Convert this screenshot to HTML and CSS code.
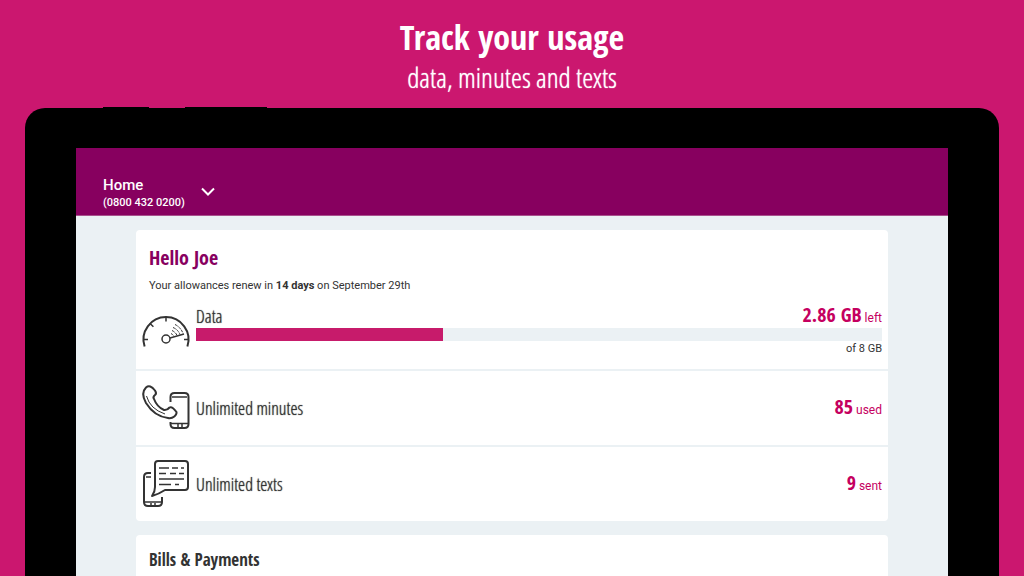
FILE: index.html
```html
<!DOCTYPE html>
<html lang="en">
<head>
    <meta charset="UTF-8">
    <meta name="viewport" content="width=device-width, initial-scale=1.0">
    <title>Track your usage</title>
    <link rel="stylesheet" href="styles.css">
</head>
<body>
    <header class="intro">
        <h1>Track your usage</h1>
        <p>data, minutes and texts</p>
    </header>

    <div class="tablet">
        <span class="side-button power"></span>
        <span class="side-button volume"></span>
        <div class="screen">
            <div class="app-bar">
                <button type="button" class="account">
                    <span class="account-text">
                        <span class="account-name">Home</span>
                        <span class="account-number">(0800 432 0200)</span>
                    </span>
                    <svg class="chevron" viewBox="0 0 14 9" aria-hidden="true">
                        <path d="M1 1.5l6 6 6-6"/>
                    </svg>
                </button>
            </div>

            <main class="content">
                <section class="card">
                    <div class="greeting">
                        <h2>Hello Joe</h2>
                        <p>Your allowances renew in <strong>14 days</strong> on September 29th</p>
                    </div>

                    <div class="row data-row">
                        <svg class="icon" viewBox="0 0 48 48" aria-hidden="true">
                            <path d="M2.600 39.500A22.500 22.500 0 1 1 45.400 39.500"/>
                            <path class="thin" d="M24 9.500v5M7.800 16.200l3.600 3.600M2 32.500h4M42 32.500h4"/>
                            <circle class="thin" cx="24" cy="32" r="4"/>
                            <path class="thin" d="M28 31l14-4"/>
                            <path class="fine" stroke-dasharray="3 1" d="M33 17.500q6 3 8 9M31 20.500q5 2 7 7M30 23.500q4 2 5 5M29 26.500q2 1 3 3"/>
                        </svg>
                        <div class="data">
                            <div class="data-top">
                                <h3>Data</h3>
                                <p class="amount"><strong>2.86 GB</strong> left</p>
                            </div>
                            <div class="bar"><div class="bar-fill" style="width: 36%"></div></div>
                            <p class="total">of 8 GB</p>
                        </div>
                    </div>

                    <div class="row">
                        <svg class="icon" viewBox="0 0 48 48" aria-hidden="true">
                            <path d="M28.500 18v-5q0-4 4-4h10q4 0 4 4v27q0 4-4 4h-10q-4 0-4-4v-2"/>
                            <path class="thin" d="M30 13h15M29 39.500h17M36 40v3M40 40v3"/>
                            <path d="M4 3.500C1 6.500 0 12 4 19C9 27 17 33 26 34C31 35 35 31 34.500 28Q30 22 27.500 23.500Q25 26.500 22 26Q15 23 12 15Q10.500 13 13 11Q15 9.500 13 6.500Q8 0 4 3.500Z"/>
                            <path class="fine" d="M4.500 12Q8 25 23 30"/>
                        </svg>
                        <h3>Unlimited minutes</h3>
                        <p class="amount"><strong>85</strong> used</p>
                    </div>

                    <div class="row">
                        <svg class="icon" viewBox="0 0 48 48" aria-hidden="true">
                            <path d="M9 13H6q-4 0-4 4v25q0 4 4 4h10q4 0 4-4v-5"/>
                            <path class="thin" d="M4 17h5M2 42h18M9 43v2M13 43v2"/>
                            <path d="M16 1h27q3 0 3 3v23q0 3-3 3H23Q17 34 10 36Q13 32 13 27V4q0-3 3-3Z"/>
                            <path class="thin" d="M17 8h10M30 8h6M39 8h3M17 13.500h7M28 13.500h6M37 13.500h5M17 19h25M17 24.500h12M33 24.500h4"/>
                        </svg>
                        <h3>Unlimited texts</h3>
                        <p class="amount"><strong>9</strong> sent</p>
                    </div>
                </section>

                <section class="card">
                    <h2 class="bills">Bills &amp; Payments</h2>
                </section>
            </main>
        </div>
    </div>
</body>
</html>
```

FILE: styles.css
```css
* {
    box-sizing: border-box;
}
body {
    margin: 0;
    height: 100vh;
    overflow: hidden;
    display: flex;
    flex-direction: column;
    background-color: #cb176f;
    color: #333;
    font-family: Roboto, "Liberation Sans", sans-serif;
    font-size: 11px;
    line-height: 16px;
}
h1, h2, h3, p {
    margin: 0;
}
h1, h2, .amount strong {
    font-family: "Open Sans Condensed", "Liberation Sans Narrow", sans-serif;
}
h3, .intro p {
    font-family: "Open Sans Condensed Light", "Roboto Condensed", sans-serif;
    font-weight: 300;
    text-shadow: 0 0 1px currentColor;
}
.intro {
    padding-top: 15px;
    color: #fff;
    text-align: center;
}
.intro h1 {
    font-size: 34px;
    line-height: 44px;
}
.intro p {
    font-size: 28px;
    line-height: 37px;
}
.tablet {
    position: relative;
    flex: 1;
    margin: 12px 25px 0;
    padding: 40px 51px 0;
    background-color: #000;
    border-radius: 20px 20px 0 0;
}
.side-button {
    position: absolute;
    top: -1px;
    height: 2px;
    background-color: #000;
}
.power {
    left: 78px;
    width: 46px;
}
.volume {
    left: 160px;
    width: 82px;
}
.screen {
    height: 100%;
    background-color: #ebf1f4;
}
.app-bar {
    padding: 28px 27px 4px;
    background-color: #87005f;
    border-bottom: 1px solid #a8508c;
}
.account {
    display: flex;
    align-items: center;
    gap: 16px;
    padding: 0;
    border: none;
    background: none;
    color: #fff;
    font-family: inherit;
    text-align: left;
    cursor: pointer;
}
.account-text {
    display: flex;
    flex-direction: column;
}
.account-name {
    font-size: 15px;
    font-weight: 500;
    line-height: 18px;
}
.account-number {
    font-size: 11px;
    font-weight: 500;
    line-height: 17px;
}
.chevron {
    width: 14px;
    height: 9px;
    margin-bottom: 4px;
    fill: none;
    stroke: #fff;
    stroke-width: 2;
}
.content {
    display: flex;
    flex-direction: column;
    gap: 14px;
    padding: 14px 60px 0;
}
.card {
    background-color: #fff;
    border-radius: 4px;
}
.greeting {
    padding: 16px 13px 0;
}
h2 {
    font-size: 20px;
    line-height: 24px;
}
.greeting h2 {
    color: #87005f;
}
.greeting p {
    padding-top: 8px;
}
.row {
    display: flex;
    align-items: center;
    gap: 6px;
    height: 76px;
    padding: 0 6px;
    border-top: 2px solid #ebf1f4;
}
.data-row {
    height: 75px;
    padding-bottom: 2px;
    border-top: none;
}
.row h3 {
    flex: 1;
    font-size: 18px;
    line-height: 20px;
}
.icon {
    width: 48px;
    height: 48px;
    overflow: visible;
    fill: none;
    stroke: #333;
    stroke-width: 2;
    stroke-linejoin: round;
}
.thin {
    stroke-width: 1.5;
}
.fine {
    stroke-width: 1;
}
.data {
    flex: 1;
}
.data-top {
    display: flex;
    align-items: center;
}
.amount {
    color: #c5005f;
    font-size: 12px;
    line-height: 20px;
}
.amount strong {
    font-size: 20px;
}
.bar {
    height: 13px;
    background-color: #ebf1f4;
}
.bar-fill {
    height: 100%;
    background-color: #c71b6b;
}
.total {
    text-align: right;
}
.bills {
    padding: 13px;
    font-size: 17px;
}
```
